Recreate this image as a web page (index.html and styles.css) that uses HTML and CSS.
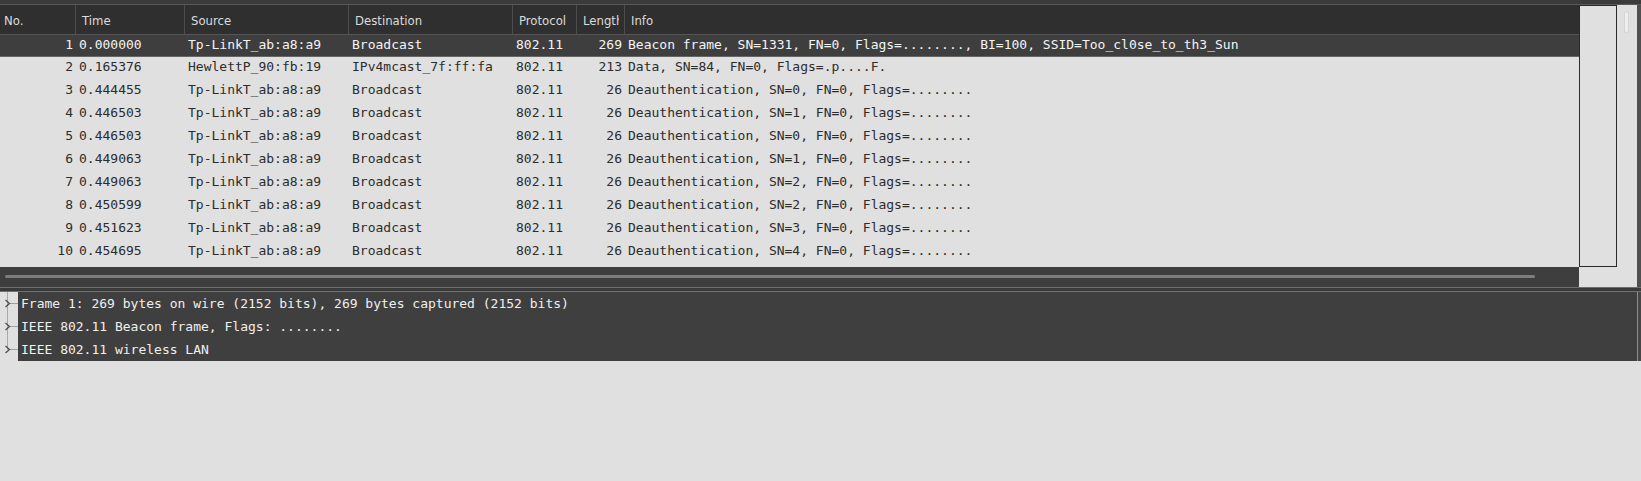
FILE: index.html
```html
<!DOCTYPE html>
<html>
<head>
<meta charset="utf-8">
<link rel="stylesheet" href="styles.css">
</head>
<body>
<div class="top-strip"></div>
<div class="upper">
  <div class="left-col">
    <div class="list">
      <div class="header">
        <div class="hcell first">No.</div>
        <div class="hcell">Time</div>
        <div class="hcell">Source</div>
        <div class="hcell">Destination</div>
        <div class="hcell">Protocol</div>
        <div class="hcell">Length</div>
        <div class="hcell">Info</div>
      </div>
      <div class="rows">
        <div class="row selected"><span class="num">1</span><span>0.000000</span><span>Tp-LinkT_ab:a8:a9</span><span>Broadcast</span><span>802.11</span><span class="num">269</span><span>Beacon frame, SN=1331, FN=0, Flags=........, BI=100, SSID=Too_cl0se_to_th3_Sun</span></div>
        <div class="row"><span class="num">2</span><span>0.165376</span><span>HewlettP_90:fb:19</span><span>IPv4mcast_7f:ff:fa</span><span>802.11</span><span class="num">213</span><span>Data, SN=84, FN=0, Flags=.p....F.</span></div>
        <div class="row"><span class="num">3</span><span>0.444455</span><span>Tp-LinkT_ab:a8:a9</span><span>Broadcast</span><span>802.11</span><span class="num">26</span><span>Deauthentication, SN=0, FN=0, Flags=........</span></div>
        <div class="row"><span class="num">4</span><span>0.446503</span><span>Tp-LinkT_ab:a8:a9</span><span>Broadcast</span><span>802.11</span><span class="num">26</span><span>Deauthentication, SN=1, FN=0, Flags=........</span></div>
        <div class="row"><span class="num">5</span><span>0.446503</span><span>Tp-LinkT_ab:a8:a9</span><span>Broadcast</span><span>802.11</span><span class="num">26</span><span>Deauthentication, SN=0, FN=0, Flags=........</span></div>
        <div class="row"><span class="num">6</span><span>0.449063</span><span>Tp-LinkT_ab:a8:a9</span><span>Broadcast</span><span>802.11</span><span class="num">26</span><span>Deauthentication, SN=1, FN=0, Flags=........</span></div>
        <div class="row"><span class="num">7</span><span>0.449063</span><span>Tp-LinkT_ab:a8:a9</span><span>Broadcast</span><span>802.11</span><span class="num">26</span><span>Deauthentication, SN=2, FN=0, Flags=........</span></div>
        <div class="row"><span class="num">8</span><span>0.450599</span><span>Tp-LinkT_ab:a8:a9</span><span>Broadcast</span><span>802.11</span><span class="num">26</span><span>Deauthentication, SN=2, FN=0, Flags=........</span></div>
        <div class="row"><span class="num">9</span><span>0.451623</span><span>Tp-LinkT_ab:a8:a9</span><span>Broadcast</span><span>802.11</span><span class="num">26</span><span>Deauthentication, SN=3, FN=0, Flags=........</span></div>
        <div class="row"><span class="num">10</span><span>0.454695</span><span>Tp-LinkT_ab:a8:a9</span><span>Broadcast</span><span>802.11</span><span class="num">26</span><span>Deauthentication, SN=4, FN=0, Flags=........</span></div>
      </div>
    </div>
    <div class="hscroll"><div class="hhandle"></div></div>
  </div>
  <div class="right-col">
    <div class="vbox-col">
      <div class="vbox"></div>
    </div>
    <div class="vstrip"><div class="vhandle"></div></div>
    <div class="edge"></div>
  </div>
</div>
<div class="splitter"></div>
<div class="details">
  <div class="gutter">
    <svg class="tree-svg" width="18" height="69" viewBox="0 0 18 69">
      <line x1="7.5" y1="0" x2="7.5" y2="57.5" stroke="#a8a8a8" stroke-width="1"/>
      <line x1="10" y1="11.5" x2="18" y2="11.5" stroke="#a0a0a0" stroke-width="1"/>
      <line x1="10" y1="34.5" x2="18" y2="34.5" stroke="#a0a0a0" stroke-width="1"/>
      <line x1="10" y1="57.5" x2="18" y2="57.5" stroke="#a0a0a0" stroke-width="1"/>
      <polyline points="5.5,8 9.5,11.5 5.5,15" fill="none" stroke="#4a4a4a" stroke-width="1.2"/>
      <polyline points="5.5,31 9.5,34.5 5.5,38" fill="none" stroke="#4a4a4a" stroke-width="1.2"/>
      <polyline points="5.5,54 9.5,57.5 5.5,61" fill="none" stroke="#4a4a4a" stroke-width="1.2"/>
    </svg>
  </div>
  <div class="tree">
    <div class="trow">Frame 1: 269 bytes on wire (2152 bits), 269 bytes captured (2152 bits)</div>
    <div class="trow">IEEE 802.11 Beacon frame, Flags: ........</div>
    <div class="trow">IEEE 802.11 wireless LAN</div>
  </div>
  <div class="edge2"></div>
</div>
</body>
</html>
```

FILE: styles.css
```css
html, body {
  margin: 0;
  padding: 0;
}
body {
  width: 1641px;
  height: 481px;
  background: #e0e0e0;
  overflow: hidden;
}
.top-strip {
  height: 4px;
  background: #3b3b3b;
  border-bottom: 1px solid #5a5a5a;
}
.upper {
  display: flex;
  height: 282px;
}
.left-col {
  width: 1579px;
  display: flex;
  flex-direction: column;
}
.list {
  height: 262px;
  background: #e0e0e0;
  display: flex;
  flex-direction: column;
}
.header {
  display: grid;
  grid-template-columns: 75px 109px 164px 164px 64px 48px 1fr;
  height: 30px;
  box-sizing: border-box;
  background: #2f2f2f;
  border-bottom: 1px solid #555555;
}
.hcell {
  font-family: "DejaVu Sans Condensed", "DejaVu Sans", sans-serif;
  font-stretch: condensed;
  font-size: 13px;
  color: #dcdcdc;
  line-height: 26px;
  padding-top: 3px;
  padding-left: 6px;
  margin-right: 5px;
  border-left: 1px solid #4d4d4d;
  white-space: nowrap;
  overflow: hidden;
}
.hcell.first {
  border-left: none;
  padding-left: 4px;
}
.rows {
  display: flex;
  flex-direction: column;
}
.row {
  display: grid;
  grid-template-columns: 75px 109px 164px 164px 64px 48px 1fr;
  height: 23px;
  box-sizing: border-box;
  font-family: "DejaVu Sans Mono", monospace;
  font-size: 13px;
  line-height: 20px;
  padding-bottom: 3px;
  color: #2c2c2c;
  white-space: nowrap;
}
.row span {
  padding-left: 4px;
  overflow: hidden;
}
.row span.num {
  text-align: right;
  padding-left: 0;
  padding-right: 2px;
}
.row.selected {
  height: 22px;
  background: #3e3e3e;
  color: #f4f4f4;
  border-bottom: 1px solid #666666;
  padding-bottom: 1px;
}
.hscroll {
  height: 20px;
  background: #3e3e3e;
  padding-top: 8px;
  padding-left: 5px;
  box-sizing: border-box;
}
.hhandle {
  width: 1530px;
  height: 3px;
  border-radius: 2px;
  background: #7c7c7c;
}
.right-col {
  display: flex;
  width: 62px;
}
.vbox-col {
  width: 38px;
}
.vbox {
  height: 262px;
  box-sizing: border-box;
  border: 1px solid #2a2a2a;
  background: #e0e0e0;
}
.vstrip {
  width: 20px;
  background: #e0e0e0;
}
.vhandle {
  width: 3px;
  height: 20px;
  margin-top: 7px;
  margin-left: 8px;
  border-radius: 2px;
  background: #eeeeee;
  box-shadow: 0 0 0 1px #d4d4d4;
}
.edge {
  width: 4px;
  background: #4f4f4f;
}
.splitter {
  height: 3px;
  background: #3a3a3a;
  border-top: 1px solid #6e6e6e;
  border-bottom: 1px solid #6e6e6e;
}
.details {
  display: flex;
  height: 69px;
}
.gutter {
  width: 18px;
  background: #e0e0e0;
}
.tree-svg {
  display: block;
}
.tree {
  width: 1619px;
  background: #3f3f3f;
  border-right: 1px solid #8c8c8c;
  font-family: "DejaVu Sans Mono", monospace;
  font-size: 13px;
  color: #efefef;
}
.trow {
  height: 23px;
  line-height: 23px;
  padding-left: 3px;
  white-space: nowrap;
}
.edge2 {
  width: 3px;
  background: #464646;
}
```
